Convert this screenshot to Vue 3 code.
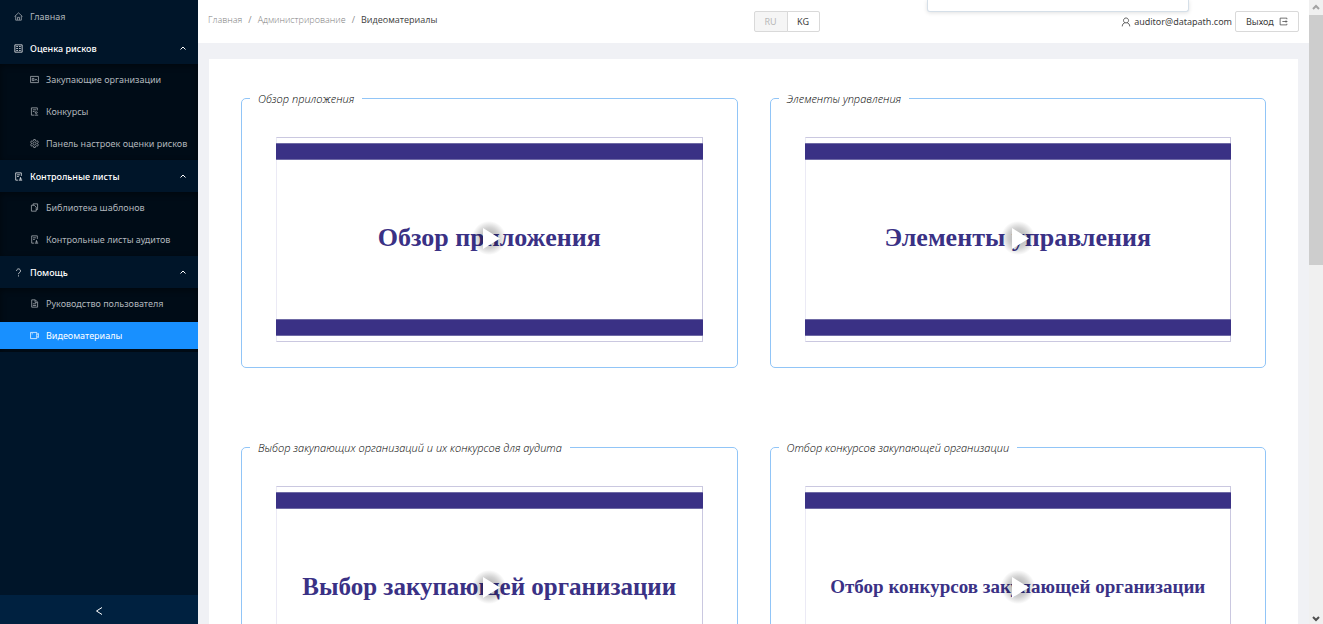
<script setup>
import { ref } from 'vue'

const icons = {
  home: ['M1 8 8 1.5 15 8', 'M3 7v7.5h10V7', 'M6.3 14V9.5h3.4V14'],
  risk: ['M1.5 1.5h13v13h-13z', 'M4 4.5h3M9 4.5h3M4 8h3M9 8h3M4 11.5h3M9 11.5h3'],
  org: ['M1 2.5h14v11H1z', 'M4 6h3v4H4z', 'M9 10l1.5-3L13 10'],
  tender: ['M13 6V1.5H2.5v13H7', 'M5 5h6M5 8h3', 'M11 8.5a1.7 1.7 0 1 0 .1 0M8 14.5h6.5'],
  gear: [
    'M8 5.3a2.7 2.7 0 1 0 .1 0',
    'M6.6 1h2.8l.5 2 1.5.9 2-.6 1.4 2.4L13.3 7.2v1.6l1.5 1.5-1.4 2.4-2-.6-1.5.9-.5 2H6.6l-.5-2-1.5-.9-2 .6-1.4-2.4 1.5-1.5V7.2L1.2 5.7l1.4-2.4 2 .6 1.5-.9z'
  ],
  audit: ['M13 7V1.5H3v13h4', 'M5.5 5h5M5.5 8h3', 'M11.5 9v4M8.5 14.5h6', 'M9.5 12.5H14'],
  library: ['M5.5 4V1.5h8v10H11', 'M2.5 4h5L11 7.5v7H2.5z'],
  help: ['M4.5 5a3.5 3.5 0 1 1 5.5 3C8.5 9 8 9.5 8 11', 'M8 13v2'],
  file: ['M3 1.5h6.5L13.5 5.5v9H3z', 'M9 2v4h4', 'M5 8.5h6M5 11.5h6'],
  video: ['M1 2.5h11v11H1z', 'M12 6l3-1.5v7L12 10', 'M3 5h2']
}

const groups = ref([
  {
    label: 'Оценка рисков',
    icon: 'risk',
    items: [
      { label: 'Закупающие организации', icon: 'org' },
      { label: 'Конкурсы', icon: 'tender' },
      { label: 'Панель настроек оценки рисков', icon: 'gear' }
    ]
  },
  {
    label: 'Контрольные листы',
    icon: 'audit',
    items: [
      { label: 'Библиотека шаблонов', icon: 'library' },
      { label: 'Контрольные листы аудитов', icon: 'audit' }
    ]
  },
  {
    label: 'Помощь',
    icon: 'help',
    items: [
      { label: 'Руководство пользователя', icon: 'file' },
      { label: 'Видеоматериалы', icon: 'video', active: true }
    ]
  }
])

const videos = [
  { legend: 'Обзор приложения', title: 'Обзор приложения', size: 'large' },
  { legend: 'Элементы управления', title: 'Элементы управления', size: 'large' },
  { legend: 'Выбор закупающих организаций и их конкурсов для аудита', title: 'Выбор закупающей организации', size: 'medium' },
  { legend: 'Отбор конкурсов закупающей организации', title: 'Отбор конкурсов закупающей организации', size: 'small' }
]
</script>

<template>
  <div class="layout">
    <aside class="sider">
      <nav class="menu">
        <a class="row top" href="#">
          <svg class="icon" viewBox="0 0 16 16"><path v-for="d in icons.home" :key="d" :d="d" /></svg>
          <span>Главная</span>
        </a>
        <template v-for="group in groups" :key="group.label">
          <button class="row top group" type="button" aria-expanded="true">
            <svg class="icon" viewBox="0 0 16 16"><path v-for="d in icons[group.icon]" :key="d" :d="d" /></svg>
            <span>{{ group.label }}</span>
            <svg class="caret" viewBox="0 0 6 4"><path d="M.5 3.5 3 1l2.5 2.5" /></svg>
          </button>
          <div class="submenu">
            <a v-for="item in group.items" :key="item.label" class="row sub" :class="{ active: item.active }" href="#">
              <svg class="icon" viewBox="0 0 16 16"><path v-for="d in icons[item.icon]" :key="d" :d="d" /></svg>
              <span>{{ item.label }}</span>
            </a>
          </div>
        </template>
      </nav>
      <button class="trigger" type="button" aria-label="Свернуть меню">
        <svg viewBox="0 0 8 8"><path d="M7 .5 1.5 4 7 7.5" /></svg>
      </button>
    </aside>

    <div class="page">
      <header class="header">
        <nav class="crumbs">
          <a href="#">Главная</a><i>/</i><a href="#">Администрирование</a><i>/</i><span>Видеоматериалы</span>
        </nav>
        <div class="tools">
          <div class="lang">
            <button type="button" disabled>RU</button>
            <button type="button">KG</button>
          </div>
          <div class="account">
            <svg class="user" viewBox="0 0 16 16"><path d="M8 1.5a4 4 0 1 0 .1 0M2 15c0-3 2-5.5 4.5-6M14 15c0-3-2-5.5-4.5-6" /></svg>
            <span>auditor@datapath.com</span>
            <button class="logout" type="button">
              Выход
              <svg viewBox="0 0 16 16"><path d="M14 4V2H2v12h12v-2M6 8h9M12.5 6v4" /></svg>
            </button>
          </div>
        </div>
        <div class="popup"></div>
      </header>
      <main class="main">
        <div class="content">
          <fieldset v-for="video in videos" :key="video.legend" class="card">
            <legend>{{ video.legend }}</legend>
            <button class="slide" type="button" :aria-label="video.legend">
              <span class="band"></span>
              <span class="title" :class="video.size">{{ video.title }}</span>
              <span class="band"></span>
              <span class="play">
                <svg viewBox="0 0 34 34"><path d="M11 7v21l17-10.5z" /></svg>
              </span>
            </button>
          </fieldset>
        </div>
      </main>
    </div>

    <div class="scrollbar">
      <svg class="arrow" viewBox="0 0 14 15"><path d="M4 9l3-3 3 3" /></svg>
      <div class="thumb"></div>
      <svg class="arrow down" viewBox="0 0 14 15"><path d="M4 8l3 3 3-3" /></svg>
    </div>
  </div>
</template>

<style>
body {
  margin: 0;
}
</style>

<style scoped>
* {
  box-sizing: border-box;
}
.layout {
  display: flex;
  height: 100vh;
  overflow: hidden;
  background: #f0f1f5;
  color: #404040;
  font-family: "Noto Sans", "Open Sans", sans-serif;
  font-size: 9px;
}
button {
  font: inherit;
  padding: 0;
  cursor: pointer;
}
a {
  text-decoration: none;
}
svg {
  flex: none;
  fill: none;
  stroke: currentColor;
}
.sider {
  display: flex;
  flex: none;
  flex-direction: column;
  width: 198px;
  background: #001529;
}
.menu {
  flex: 1;
}
.row {
  display: flex;
  align-items: center;
  color: #b0b6bc;
  white-space: nowrap;
}
.row .icon {
  width: 9px;
  height: 9px;
  margin-right: 7px;
  stroke-width: 1.3;
}
.top {
  width: 100%;
  height: 32px;
  padding: 0 12px 0 14px;
}
.group {
  border: 0;
  background: none;
  color: #fff;
  font-weight: 500;
}
.caret {
  width: 6px;
  height: 4px;
  margin-left: auto;
}
.submenu {
  display: flex;
  flex-direction: column;
  background: #000c17;
  box-shadow: inset 0 2px 6px rgba(0, 0, 0, 0.45);
}
.sub {
  height: 27px;
  margin: 2px 0 3px;
  padding-left: 30px;
}
.sub.active {
  background: #1890ff;
  color: #fff;
}
.trigger {
  display: flex;
  align-items: center;
  justify-content: center;
  height: 29px;
  border: 0;
  background: #002140;
  color: #fff;
}
.trigger svg {
  width: 8px;
  height: 8px;
  margin-top: 3px;
}
.page {
  display: flex;
  flex: 1;
  flex-direction: column;
  min-width: 0;
}
.header {
  position: relative;
  display: flex;
  align-items: center;
  height: 43px;
  flex: none;
  padding: 0 10px;
  background: #fff;
}
.crumbs {
  flex: 1;
  margin-bottom: 5px;
  color: #8c8c8c;
  font-family: "Open Sans", sans-serif;
}
.crumbs a {
  color: #808080;
  font-weight: 300;
}
.crumbs i {
  margin: 0 6px;
  font-style: normal;
}
.crumbs span {
  color: #404040;
}
.tools {
  display: flex;
  flex: 1;
  align-items: center;
  justify-content: space-between;
}
.lang {
  display: flex;
}
.lang button {
  width: 33px;
  height: 21px;
  border: 1px solid #d9d9d9;
  border-radius: 0 2px 2px 0;
  background: #fff;
  color: #404040;
}
.lang button:first-child {
  width: 34px;
  margin-right: -1px;
  border-radius: 2px 0 0 2px;
  background: #f5f5f5;
  color: #b8b8b8;
}
.account {
  display: flex;
  align-items: center;
}
.account .user {
  width: 10px;
  height: 10px;
  margin-right: 3px;
  stroke-width: 1.3;
}
.logout {
  display: flex;
  align-items: center;
  justify-content: space-between;
  width: 64px;
  height: 21px;
  margin-left: 3px;
  padding: 0 10px;
  border: 1px solid #d9d9d9;
  border-radius: 2px;
  background: #fff;
  color: #404040;
}
.logout svg {
  width: 9px;
  height: 9px;
  stroke-width: 1.3;
}
.popup {
  position: absolute;
  top: 0;
  right: 120px;
  width: 262px;
  height: 12px;
  border: 1px solid #d5dfe8;
  border-top: 0;
  border-radius: 0 0 3px 3px;
  background: #fff;
  box-shadow: 0 1px 4px rgba(0, 0, 0, 0.12);
}
.main {
  flex: 1;
  min-height: 0;
  padding: 16px 11px 0;
  overflow: hidden;
}
.content {
  display: grid;
  grid-template-columns: 1fr 1fr;
  gap: 72px 32px;
  padding: 32px;
  background: #fff;
}
.card {
  min-width: 0;
  margin: 0;
  padding: 31px 34px 25px;
  border: 1px solid #91c5f7;
  border-radius: 5px;
}
.card legend {
  margin-left: -26px;
  padding: 0 8px;
  color: #000;
  font-family: "Open Sans", sans-serif;
  font-size: 11px;
  font-style: italic;
  font-weight: 300;
  line-height: 15px;
}
.slide {
  position: relative;
  display: flex;
  flex-direction: column;
  width: 100%;
  aspect-ratio: 426 / 205;
  padding: 5px 0;
  border: 1px solid #cac8e0;
  border-left-color: #ebeaf5;
  background: #fff;
}
.band {
  height: 17px;
  margin: 0 -1px;
  border: 1px solid #6f6aa5;
  border-width: 1px 0;
  background: #3a3185;
}
.title {
  display: flex;
  flex: 1;
  align-items: center;
  justify-content: center;
  padding-bottom: 3px;
  color: #3a3185;
  font-family: "Liberation Serif", serif;
  font-weight: 700;
  white-space: nowrap;
}
.title.large {
  font-size: 26px;
}
.title.medium {
  font-size: 25px;
}
.title.small {
  font-size: 19px;
}
.play {
  position: absolute;
  inset: 0;
  display: flex;
  align-items: center;
  justify-content: center;
  padding-bottom: 4px;
}
.play svg {
  width: 34px;
  height: 34px;
  border-radius: 50%;
  background: radial-gradient(circle closest-side, rgba(0, 0, 0, 0.35), rgba(0, 0, 0, 0.18) 60%, transparent);
  fill: #fff;
  stroke: none;
}
.scrollbar {
  display: flex;
  flex: none;
  flex-direction: column;
  width: 14px;
  background: #f0f0f0;
}
.arrow {
  width: 14px;
  height: 15px;
  color: #a3a3a3;
  stroke-width: 2;
}
.arrow.down {
  margin-top: auto;
  color: #505050;
}
.thumb {
  height: 40%;
  background: #cdcdcd;
}
</style>
